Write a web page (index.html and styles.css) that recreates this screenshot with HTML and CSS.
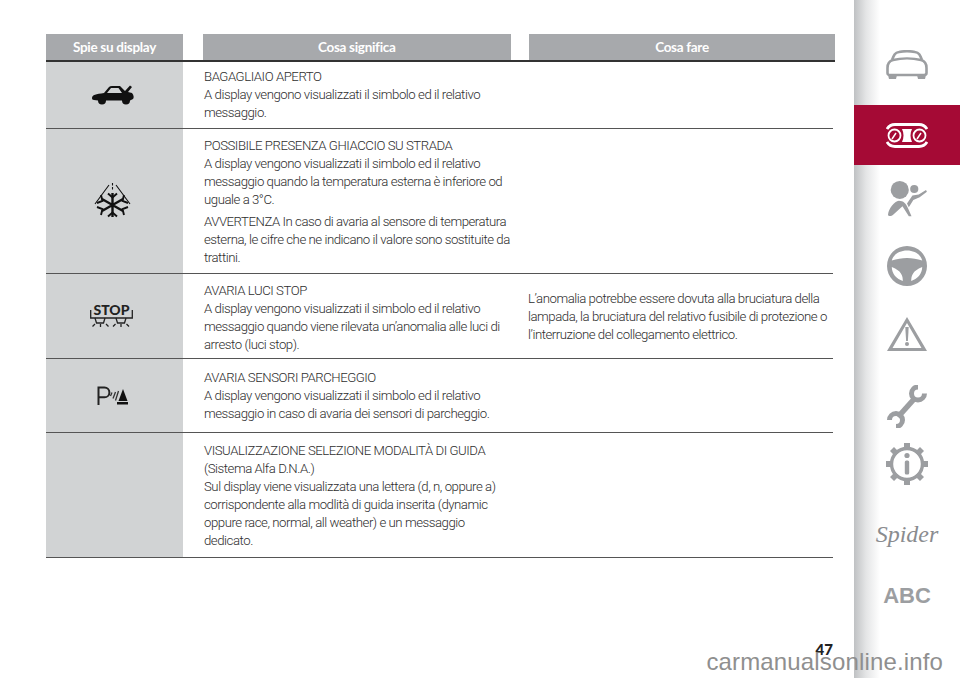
FILE: index.html
```html
<!DOCTYPE html>
<html lang="it">
<head>
<meta charset="utf-8">
<title>Spie su display</title>
<link rel="stylesheet" href="styles.css">
</head>
<body>
<div class="page">
  <main class="content">
    <div class="table">
      <div class="head">
        <div class="th c1">Spie su display</div>
        <div class="th c2">Cosa significa</div>
        <div class="th c3">Cosa fare</div>
      </div>
      <div class="row r1">
        <div class="icon">
          <svg width="42" height="20" viewBox="0 0 42 20"><path fill-rule="evenodd" fill="#111" d="M0 13C0 10 4 9 12 8L17 2Q18 1 20 1H28L33 6 38 .5 40 2 36 7 40 8C42 10 42 13 41 14L38 15.500A4 4 0 0 1 30 15.500H14A4 4 0 0 1 6 15.500L2 15C.5 15 0 14 0 13ZM19 3L15 8H30L26.500 3Z"/></svg>
        </div>
        <div class="text"><p>BAGAGLIAIO APERTO<br>A display vengono visualizzati il simbolo ed il relativo<br>messaggio.</p></div>
        <div class="action"></div>
      </div>
      <div class="row r2">
        <div class="icon">
          <svg width="38" height="36" viewBox="0 0 38 36" fill="none" stroke="#111"><path d="M1 21 15 2M36 21 22 2M18.500 0v2.500M18.500 4v2.500" stroke-width="1.100"/><path d="M18.500 10v24M8 16l21 12M29 16 8 28" stroke-width="2.400"/><path d="m14 10.500 4.500 4 4.500-4M14 33.500l4.500-4 4.500 4M7 12l1.500 6-5.500 2M30 12l-1.500 6 5.500 2M7 32l1.500-6-5.500-2M30 32l-1.500-6 5.500-2" stroke-width="1.900"/></svg>
        </div>
        <div class="text"><p>POSSIBILE PRESENZA GHIACCIO SU STRADA<br>A display vengono visualizzati il simbolo ed il relativo<br>messaggio quando la temperatura esterna è inferiore od<br>uguale a 3°C.</p><p>AVVERTENZA In caso di avaria al sensore di temperatura<br>esterna, le cifre che ne indicano il valore sono sostituite da<br>trattini.</p></div>
        <div class="action"></div>
      </div>
      <div class="row r3">
        <div class="icon">
          <div class="stop"><span class="stop-word">STOP</span>
          <svg class="stop-lamps" width="43" height="17" viewBox="0 0 43 17" fill="none" stroke="#222" stroke-width="1.300"><path d="M.7 0v8h41.600V0"/><path d="M5 8l1.500 5h7L15 8M26 8l1.500 5h7L36 8"/><path d="M10.500 14v3M31 14v3M5 14l-2.500 2.500M16 14l2.500 2.500M25.500 14 23 16.500M36.500 14l2.500 2.500"/></svg></div>
        </div>
        <div class="text"><p>AVARIA LUCI STOP<br>A display vengono visualizzati il simbolo ed il relativo<br>messaggio quando viene rilevata un’anomalia alle luci di<br>arresto (luci stop).</p></div>
        <div class="action"><p>L’anomalia potrebbe essere dovuta alla bruciatura della<br>lampada, la bruciatura del relativo fusibile di protezione o<br>l’interruzione del collegamento elettrico.</p></div>
      </div>
      <div class="row r4">
        <div class="icon">
          <svg width="31" height="19" viewBox="0 0 31 19"><path d="M1.500 19V1.500h6a4.800 4.800 0 0 1 0 9.800h-6" fill="none" stroke="#222" stroke-width="2"/><path d="M13.500 10l1.500-3.500M16 12.500 18.500 6M18.500 14.500 21.500 5" fill="none" stroke="#333" stroke-width="1.300"/><path d="M26 3l4.500 12h-9z" fill="#111"/><path d="M20 16h11v2.500H20z" fill="#111"/></svg>
        </div>
        <div class="text"><p>AVARIA SENSORI PARCHEGGIO<br>A display vengono visualizzati il simbolo ed il relativo<br>messaggio in caso di avaria dei sensori di parcheggio.</p></div>
        <div class="action"></div>
      </div>
      <div class="row r5">
        <div class="icon"></div>
        <div class="text"><p>VISUALIZZAZIONE SELEZIONE MODALITÀ DI GUIDA<br>(Sistema Alfa D.N.A.)<br>Sul display viene visualizzata una lettera (d, n, oppure a)<br>corrispondente alla modlità di guida inserita (dynamic<br>oppure race, normal, all weather) e un messaggio<br>dedicato.</p></div>
        <div class="action"></div>
      </div>
    </div>
    <div class="pagenum">47</div>
  </main>
  <nav class="side">
    <div class="tab t1">
      <svg width="42" height="29" viewBox="0 0 42 29" fill="none" stroke="#9c9ea1" stroke-width="2.600"><path d="M6 10C8 5 9 2.500 13 2C18 1 24 1 29 2C33 2.500 34 5 36 10"/><path d="M7 10C15 8 27 8 35 10C39 11 40.500 14 40.500 18V23Q40.500 25 38 25H4Q1.500 25 1.500 23V18C1.500 14 3 11 7 10Z"/><path d="M2 25h9l-1 4H3ZM31 25h9l-1 4h-7Z" fill="#9c9ea1" stroke="none"/></svg>
    </div>
    <div class="tab active">
      <svg width="42" height="25" viewBox="0 0 42 25" fill="none" stroke="#fff"><path d="M1 6C3 2.500 5 1.500 9 1.500H33C37 1.500 39 2.500 41 6M1 19C3 22.500 5 23.500 9 23.500H33C37 23.500 39 22.500 41 19" stroke-width="2.800"/><circle cx="8.500" cy="12.500" r="6" stroke-width="1.800"/><circle cx="33.500" cy="12.500" r="6" stroke-width="1.800"/><path d="M6 16l4-6M31 16l4-6" stroke-width="1.500"/><path d="M16 6H26C24 10 24 15 26 19H16C18 15 18 10 16 6Z" fill="#fff" stroke="none"/></svg>
    </div>
    <div class="tab t3">
      <svg width="40" height="38" viewBox="0 0 44 42" fill="#9c9ea1"><circle cx="14" cy="11" r="10"/><circle cx="30" cy="10" r="4.500"/><path d="M1 38c1-7 7-14 12-15 5 0 8 3 10 8l4 9h-3l-7-11-10 9c-3 3-6 2-6 0z"/><path d="M22 26l6-9 7-1 8-5 1 2-8 6-7 3-5 8z"/></svg>
    </div>
    <div class="tab t4">
      <svg width="40" height="40" viewBox="0 0 40 40" fill="#9c9ea1"><path fill-rule="evenodd" d="M20 0a20 20 0 1 1 0 40 20 20 0 0 1 0-40zm0 4.500C12 4.500 6 9 4.800 14.500c5-1.500 10-2.500 15.200-2.500s10.200 1 15.200 2.500C34 9 28 4.500 20 4.500zM4.800 21c0 7 5 12 11 14 0-5-1-10-11-14zm30.400 0c-10 4-11 9-11 14 6-2 11-7 11-14z"/></svg>
    </div>
    <div class="tab t5">
      <svg width="40" height="34" viewBox="0 0 40 34" fill="#9c9ea1"><path fill-rule="evenodd" d="M20 0l20 34H0zm0 6L5.500 31h29z"/><path d="M18.300 10h3.400l-.8 14h-1.800z"/><circle cx="20" cy="27" r="2"/></svg>
    </div>
    <div class="tab t6">
      <svg width="40" height="43" viewBox="0 0 40 43" fill="none" stroke="#9c9ea1"><path d="M11 32 28 13" stroke-width="5.500"/><path d="M31 2A6.500 6.500 0 1 0 37.500 8.500" stroke-width="5"/><path d="M2.500 35A6.500 6.500 0 1 1 9 41.500" stroke-width="5"/></svg>
    </div>
    <div class="tab t7">
      <svg width="42" height="42" viewBox="0 0 42 42" fill="#9c9ea1"><circle cx="21" cy="21" r="15.500" fill="none" stroke="#9c9ea1" stroke-width="3.400"/><path d="M18 0h6v6h-6zM18 36h6v6h-6zM0 18h6v6H0zM36 18h6v6h-6zM4 8l4-4 5 5-4 4zM29 33l4-4 5 5-4 4zM38 8l-4-4-5 5 4 4zM13 33l-4-4-5 5 4 4z"/><circle cx="21" cy="12.500" r="2.600"/><rect x="18.800" y="17.500" width="4.400" height="14" rx="1.500"/></svg>
    </div>
    <div class="tab t8"><span class="spider">Spider</span></div>
    <div class="tab t9"><span class="abc">ABC</span></div>
  </nav>
</div>
<div class="watermark">carmanualsonline.info</div>
</body>
</html>
```
FILE: styles.css
```css
html, body { margin: 0; padding: 0; }
body { width: 960px; height: 678px; overflow: hidden; background: #fff; font-family: "Roboto", "Liberation Sans", sans-serif; color: #333; position: relative; }
.page { display: flex; height: 678px; }
.content { width: 854px; flex: none; box-sizing: border-box; padding: 34px 19px 0 46px; display: flex; flex-direction: column; }
.table { width: 789px; }
.head { display: flex; height: 28px; box-sizing: border-box; border-bottom: 2px solid #333; width: 789px; }
.th { background: #a7a9ac; color: #fff; font-family: "Lato", sans-serif; font-weight: 700; font-size: 13.500px; letter-spacing: -.3px; line-height: 26px; text-align: center; }
.c1 { width: 137px; }
.c2 { width: 307.500px; margin-left: 20px; }
.c3 { width: 306px; margin-left: 18.500px; }
.row { display: flex; width: 787px; box-sizing: border-box; border-bottom: 1.500px solid #555; }
.r1 { height: 67px; }
.r2 { height: 145px; }
.r3 { height: 85px; }
.r4 { height: 74px; }
.r5 { height: 125px; }
.icon { width: 137px; flex: none; box-sizing: border-box; padding-right: 4px; background: #d1d3d4; display: flex; align-items: center; justify-content: center; }
.text { width: 345px; flex: none; box-sizing: border-box; padding-left: 21px; align-self: center; }
.r2 .text, .r5 .text { padding-top: 2px; }
.r3 .text { padding-top: 4px; }
.action { flex: 1; align-self: center; padding-top: 2px; }
p { margin: 0 0 4px; font-size: 13.200px; font-weight: 300; letter-spacing: -.46px; line-height: 18px; color: #2e2e2e; white-space: nowrap; }
p:last-child { margin-bottom: 0; }
.stop { display: flex; flex-direction: column; align-items: center; margin-right: 2px; }
.stop-word { font-family: "Lato", sans-serif; font-weight: 900; font-size: 14px; line-height: 10px; color: #222; }
.stop-lamps { display: block; margin-top: -5px; }
.pagenum { align-self: flex-end; margin: auto 2px 23px 0; font-family: "Lato", sans-serif; font-weight: 900; font-size: 15px; line-height: 12px; color: #222; }
.side { width: 106px; flex: none; height: 678px; box-sizing: border-box; padding-top: 50px; background: linear-gradient(to right, #bfc1c3 0, #e4e5e6 12px, #fff 26px); display: flex; flex-direction: column; }
.tab { display: flex; align-items: center; justify-content: center; width: 100%; }
.tab svg { display: block; }
.active { height: 60px; margin-top: 26px; background: #a50a35; }
.t3 { margin-top: 15px; }
.t4 { margin-top: 28px; }
.t5 { margin-top: 31px; }
.t6 { margin-top: 34px; }
.t7 { margin-top: 15px; }
.t8 { margin-top: 37px; height: 24px; }
.t9 { margin-top: 41px; height: 17px; }
.spider { font-family: "Liberation Serif", serif; font-style: italic; font-size: 24px; line-height: 24px; color: #8a8c8f; }
.abc { font-family: "Liberation Sans", sans-serif; font-weight: 700; font-size: 22px; line-height: 17px; color: #9c9ea1; }
.watermark { position: absolute; right: 17px; top: 649px; font-family: "Liberation Sans", sans-serif; font-size: 24px; letter-spacing: .15px; line-height: 26px; color: #8f8f8f; }
```
